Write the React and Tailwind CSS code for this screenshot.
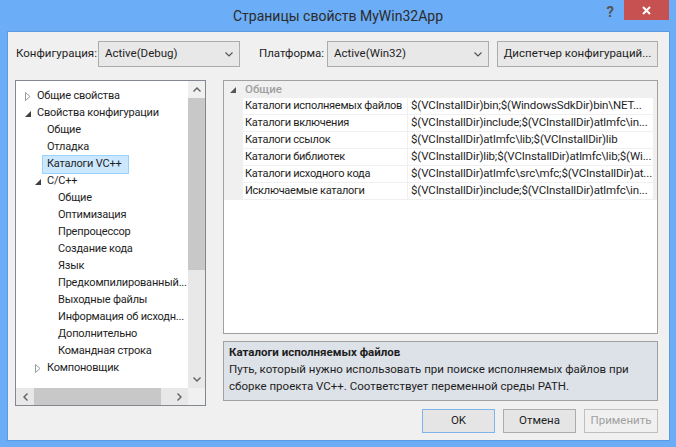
import { useState } from "react"

const ClosedArrow = () => (
  <svg width="6" height="9" viewBox="0 0 6 9" className="shrink-0">
    <path d="M0.5 0.5 L5 4.5 L0.5 8.5 Z" fill="none" stroke="#9a9a9a" strokeWidth="1" />
  </svg>
)

const OpenArrow = ({ color = "#404040" }) => (
  <svg width="6" height="6" viewBox="0 0 6 6" className="shrink-0">
    <path d="M6 0 L6 6 L0 6 Z" fill={color} />
  </svg>
)

const Chevron = () => (
  <svg width="8" height="5" viewBox="0 0 8 5" className="shrink-0">
    <path d="M0.5 0.5 L4 4 L7.5 0.5" fill="none" stroke="#555" strokeWidth="1.2" />
  </svg>
)

const treeItems = [
  { label: "Общие свойства", arrow: "closed", level: 0 },
  { label: "Свойства конфигурации", arrow: "open", level: 0 },
  { label: "Общие", level: 1 },
  { label: "Отладка", level: 1 },
  { label: "Каталоги VC++", level: 1, selected: true },
  { label: "C/C++", arrow: "open", level: 1 },
  { label: "Общие", level: 2 },
  { label: "Оптимизация", level: 2 },
  { label: "Препроцессор", level: 2 },
  { label: "Создание кода", level: 2 },
  { label: "Язык", level: 2 },
  { label: "Предкомпилированный...", level: 2 },
  { label: "Выходные файлы", level: 2 },
  { label: "Информация об исходн...", level: 2 },
  { label: "Дополнительно", level: 2 },
  { label: "Командная строка", level: 2 },
  { label: "Компоновщик", arrow: "closed", level: 1 },
]

const props = [
  ["Каталоги исполняемых файлов", "$(VCInstallDir)bin;$(WindowsSdkDir)bin\\NET..."],
  ["Каталоги включения", "$(VCInstallDir)include;$(VCInstallDir)atlmfc\\in..."],
  ["Каталоги ссылок", "$(VCInstallDir)atlmfc\\lib;$(VCInstallDir)lib"],
  ["Каталоги библиотек", "$(VCInstallDir)lib;$(VCInstallDir)atlmfc\\lib;$(Wi..."],
  ["Каталоги исходного кода", "$(VCInstallDir)atlmfc\\src\\mfc;$(VCInstallDir)at..."],
  ["Исключаемые каталоги", "$(VCInstallDir)include;$(VCInstallDir)atlmfc\\in..."],
]

const indentClass = ["pl-[9px]", "pl-[19px]", "pl-[30px]"]

const App = () => {
  const [selected, setSelected] = useState(0)

  return (
    <div
      className="w-[676px] h-[447px] bg-[#6badf6] flex flex-col overflow-hidden text-[11.5px] text-[#1e1e1e]"
      style={{ fontFamily: 'Roboto, "Noto Sans", sans-serif' }}
    >
      {/* Title bar */}
      <div className="h-[31px] shrink-0 flex items-start relative">
        <div className="flex-1 text-center pt-[6px] text-[14px] text-[#2b2b2b]">Страницы свойств MyWin32App</div>
        <div className="absolute right-[62px] top-[1px] text-[15px] font-bold text-[#555]">?</div>
        <div className="absolute right-[7px] top-0 w-[45px] h-[20px] bg-[#c75050] flex items-center justify-center">
          <svg width="9" height="9" viewBox="0 0 9 9">
            <path d="M1 1 L8 8 M8 1 L1 8" stroke="white" strokeWidth="2" />
          </svg>
        </div>
      </div>

      {/* Client area */}
      <div className="ml-[7px] mr-[6px] mb-[6px] flex-1 bg-[#f0f0f0] border border-[#5c9be0] flex flex-col pl-[7px] pt-[9px]">
        {/* Top row */}
        <div className="flex items-center h-[26px] whitespace-nowrap">
          <span className="w-[83px] shrink-0 pl-px">Конфигурация:</span>
          <div className="w-[142px] shrink-0 h-[26px] border border-[#acacac] bg-[#e8e8e8] flex items-center justify-between pl-[6px] pr-[6px]">
            <span>Active(Debug)</span>
            <Chevron />
          </div>
          <span className="ml-[19px] w-[68px] shrink-0">Платформа:</span>
          <div className="w-[162px] shrink-0 h-[26px] border border-[#acacac] bg-[#e8e8e8] flex items-center justify-between pl-[6px] pr-[6px]">
            <span>Active(Win32)</span>
            <Chevron />
          </div>
          <div className="ml-[8px] w-[161px] shrink-0 h-[26px] border border-[#acacac] bg-[#e8e8e8] flex items-center justify-center">
            Диспетчер конфигураций...
          </div>
        </div>

        {/* Main */}
        <div className="flex mt-[13px] gap-[17px]">
          {/* Tree */}
          <div className="w-[191px] shrink-0 h-[326px] border border-[#828790] bg-white flex flex-col">
            <div className="flex flex-1 min-h-0">
              <div className="flex-1 min-w-0 pt-[7px] overflow-hidden text-[11px] tracking-[-0.2px]">
                {treeItems.map((item, i) => (
                  <div key={i} className={`h-[17px] flex items-center ${indentClass[item.level]}`}>
                    <span className="w-[12px] shrink-0 flex items-center">
                      {item.arrow === "closed" && <ClosedArrow />}
                      {item.arrow === "open" && <OpenArrow />}
                    </span>
                    {item.selected ? (
                      <span className="-ml-[5px] pl-[4px] pr-[7px] h-[19px] flex items-center bg-[#cce8ff] border border-[#99d1ff] whitespace-nowrap">
                        {item.label}
                      </span>
                    ) : (
                      <span className="whitespace-nowrap">{item.label}</span>
                    )}
                  </div>
                ))}
              </div>
              {/* Vertical scrollbar */}
              <div className="w-[17px] shrink-0 bg-[#e8e8e8] flex flex-col">
                <div className="h-[17px] bg-[#f0f0f0] flex items-center justify-center">
                  <svg width="8" height="5" viewBox="0 0 8 5">
                    <path d="M0.5 4.5 L4 1 L7.5 4.5" fill="none" stroke="#606060" strokeWidth="1.4" />
                  </svg>
                </div>
                <div className="h-[172px] bg-[#c8c8c8]" />
                <div className="flex-1" />
                <div className="h-[17px] flex items-center justify-center">
                  <svg width="8" height="5" viewBox="0 0 8 5">
                    <path d="M0.5 0.5 L4 4 L7.5 0.5" fill="none" stroke="#606060" strokeWidth="1.4" />
                  </svg>
                </div>
              </div>
            </div>
            {/* Horizontal scrollbar */}
            <div className="h-[17px] flex shrink-0">
              <div className="flex-1 bg-[#e8e8e8] flex items-center">
                <div className="w-[18px] flex items-center justify-center">
                  <svg width="5" height="8" viewBox="0 0 5 8">
                    <path d="M4.5 0.5 L1 4 L4.5 7.5" fill="none" stroke="#606060" strokeWidth="1.4" />
                  </svg>
                </div>
                <div className="w-[127px] h-[17px] bg-[#c8c8c8]" />
                <div className="flex-1" />
                <div className="w-[18px] flex items-center justify-center">
                  <svg width="5" height="8" viewBox="0 0 5 8">
                    <path d="M0.5 0.5 L4 4 L0.5 7.5" fill="none" stroke="#606060" strokeWidth="1.4" />
                  </svg>
                </div>
              </div>
              <div className="w-[17px] bg-[#f0f0f0]" />
            </div>
          </div>

          {/* Right column */}
          <div className="w-[435px] shrink-0 flex flex-col">
            {/* Property grid */}
            <div className="h-[254px] border border-[#a0a0a0] bg-white flex flex-col">
              <div className="h-[17px] bg-[#f0f0f0] flex items-center pl-[6px]">
                <span className="w-[15px] flex items-center">
                  <OpenArrow color="#555" />
                </span>
                <span className="font-medium text-[#a0a0a0]">Общие</span>
              </div>
              <div className="bg-[#f0f0f0] pl-[19px] pr-[4px] flex flex-col gap-px pb-px">
                {props.map(([name, value], i) => (
                  <div
                    key={i}
                    className="h-[16px] flex gap-px cursor-default"
                    onClick={() => setSelected(i)}
                  >
                    <div className="w-[164px] shrink-0 bg-white flex items-center pl-[2px] whitespace-nowrap overflow-hidden text-[11px] tracking-[-0.25px]">
                      {name}
                    </div>
                    <div className="flex-1 min-w-0 bg-white flex items-center pl-[3px] whitespace-nowrap overflow-hidden tracking-[-0.15px]">
                      {value}
                    </div>
                  </div>
                ))}
              </div>
              <div className="flex-1" />
            </div>

            {/* Description */}
            <div className="mt-[7px] h-[60px] border border-[#a0a0a0] bg-[#dde1e8] px-[5px] pt-[2px] leading-[17px]">
              <div className="font-bold">{props[selected][0]}</div>
              <div>Путь, который нужно использовать при поиске исполняемых файлов при сборке проекта VC++. Соответствует переменной среды PATH.</div>
            </div>

            {/* Buttons */}
            <div className="mt-[8px] flex justify-end gap-[8px]">
              <button className="w-[73px] h-[24px] border border-[#7eb4ea] bg-[#e5e5e5]">OK</button>
              <button className="w-[73px] h-[24px] border border-[#acacac] bg-[#e5e5e5]">Отмена</button>
              <button className="w-[74px] h-[24px] border border-[#bfbfbf] bg-[#f0f0f0] text-[#a0a0a0]">Применить</button>
            </div>
          </div>
        </div>
      </div>
    </div>
  )
}

export default App
